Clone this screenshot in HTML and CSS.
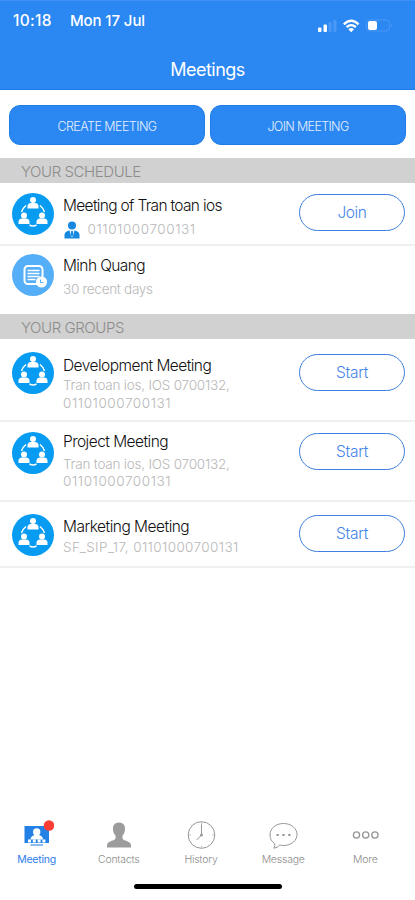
FILE: index.html
```html
<!DOCTYPE html>
<html lang="en">
<head>
<meta charset="utf-8">
<title>Meetings</title>
<link rel="stylesheet" href="styles.css">
</head>
<body>
<svg class="defs" aria-hidden="true">
  <symbol id="group" viewBox="0 0 42 42">
    <circle cx="21" cy="21" r="21" fill="#079cf2"/>
    <g fill="none" stroke="#fff" stroke-width="1.5">
      <path d="M14 12.500A13 13 0 0 0 9.500 19M28 12.500A13 13 0 0 1 32.500 19M17.500 32Q21 34 24.500 32"/>
    </g>
    <g fill="#fff">
      <circle cx="21" cy="6.900" r="3"/><path d="M15.500 15.500v-2.200q0-3 3.500-3.300h4q3.500.3 3.500 3.300v2.200z"/>
      <circle cx="12" cy="22.500" r="3"/><path d="M6.500 31v-2.200q0-3 3.500-3.300h4q3.500.3 3.500 3.300V31z"/>
      <circle cx="30" cy="22.500" r="3"/><path d="M24.500 31v-2.200q0-3 3.500-3.300h4q3.500.3 3.500 3.300V31z"/>
    </g>
  </symbol>
</svg>
<header class="header">
  <div class="status">
    <span class="time">10:18</span><span class="date">Mon 17 Jul</span>
    <svg class="signals" width="76" height="16" viewBox="0 0 76 16">
      <g fill="#fff"><rect x="1" y="9.500" width="3.500" height="4.500" rx="1"/><rect x="6.500" y="6.500" width="3.500" height="7.500" rx="1"/></g>
      <g fill="#4a98f5"><rect x="11.500" y="4" width="3.200" height="10" rx="1"/><rect x="16.300" y="2" width="3.200" height="12" rx="1"/></g>
      <g fill="none" stroke="#fff" stroke-width="2.300"><path d="M26.800 6.300Q34.200-.7 41.600 6.300M29.500 9.200Q34.200 5 38.900 9.200"/></g>
      <path d="M31.300 11.200q2.900-2.300 5.800 0l-2.900 3z" fill="#fff"/>
      <rect x="49.500" y="2" width="23" height="11" rx="3.500" fill="none" stroke="#4a98f5"/>
      <path d="M74 5.500q2 2 0 4z" fill="#4a98f5"/>
      <rect x="51" y="3" width="9" height="9" rx="2" fill="#fff"/>
    </svg>
  </div>
  <h1 class="title">Meetings</h1>
</header>
<main class="main">
  <div class="actions">
    <button class="action create">CREATE MEETING</button>
    <button class="action joinm">JOIN MEETING</button>
  </div>
  <h2 class="section"><span class="schedule">YOUR SCHEDULE</span></h2>
  <article class="row r1">
    <svg class="avatar"><use href="#group"/></svg>
    <div class="info"><h3 class="name n1">Meeting of Tran toan ios</h3>
      <p class="sub host"><svg width="16" height="18" viewBox="0 0 16 18"><circle cx="8" cy="4.600" r="4" fill="#1688e0"/><path d="M.5 17.500v-3.500q0-3.500 4.500-4.500h6q4.500 1 4.500 4.500v3.500z" fill="#1688e0"/><path d="M5.500 9.300h5L8.800 16H7.200z" fill="#fff"/><path d="M7.200 10h1.600l.6 4L8 16l-1.400-2z" fill="#1688e0"/></svg><span class="s1">01101000700131</span></p></div>
    <button class="pill join">Join</button>
  </article>
  <article class="row r2">
    <svg class="avatar" viewBox="0 0 42 42"><circle cx="21" cy="21" r="21" fill="#55aef8"/><rect x="12.500" y="12" width="18" height="18" rx="3.500" fill="none" stroke="#fff" stroke-width="2"/><path d="M15.500 16.500h12M15.500 19.500h12M15.500 22.500h12M15.500 25.500h8" stroke="#fff" stroke-width="1.400"/><circle cx="29.500" cy="28" r="5.600" fill="#fff"/><path d="M28.500 25.500v3h3" stroke="#55aef8" fill="none"/></svg>
    <div class="info"><h3 class="name n2">Minh Quang</h3><p class="sub s2">30 recent days</p></div>
  </article>
  <h2 class="section groups"><span class="grouphead">YOUR GROUPS</span></h2>
  <article class="row r3">
    <svg class="avatar"><use href="#group"/></svg>
    <div class="info"><h3 class="name n3">Development Meeting</h3><p class="sub"><span class="members">Tran toan ios, IOS 0700132,</span><br><span class="s1">01101000700131</span></p></div>
    <button class="pill">Start</button>
  </article>
  <article class="row r4">
    <svg class="avatar"><use href="#group"/></svg>
    <div class="info"><h3 class="name n4">Project Meeting</h3><p class="sub"><span class="members">Tran toan ios, IOS 0700132,</span><br><span class="s1">01101000700131</span></p></div>
    <button class="pill">Start</button>
  </article>
  <article class="row r5">
    <svg class="avatar"><use href="#group"/></svg>
    <div class="info"><h3 class="name n5">Marketing Meeting</h3><p class="sub s5">SF_SIP_17, 01101000700131</p></div>
    <button class="pill">Start</button>
  </article>
</main>
<nav class="tabs">
  <a class="tab active"><svg width="34" height="32" viewBox="0 0 34 32"><rect x="4.500" y="6" width="24.500" height="17" fill="#2380e4"/><path d="M10.500 25h12.500" stroke="#62a4ed" stroke-width="1.500"/><circle cx="16.700" cy="12" r="3.700" fill="#fff"/><path d="M10.500 19.500q0-3.500 4-4.500h4.500q4 1 4 4.500z" fill="#fff"/><path d="M8 21h18" stroke="#fff" stroke-width="3" stroke-dasharray="3 1.800"/><circle cx="29" cy="5.500" r="5.300" fill="#fa3d35"/></svg><span>Meeting</span></a>
  <a class="tab"><svg width="34" height="32" viewBox="0 0 34 32"><path d="M17 2.500c4.300 0 6.300 3 6 6.700 0 2.500-1 4.900-2.500 6.400v2.900c.5 2.300 8 2.300 8.500 6.500v2.500H5V25c.5-4.200 8-4.200 8.500-6.500v-2.900C12 14.100 11 11.700 11 9.200c-.3-3.700 1.700-6.700 6-6.700z" fill="#9c9c9c"/></svg><span>Contacts</span></a>
  <a class="tab"><svg width="34" height="32" viewBox="0 0 34 32" fill="none" stroke="#969696"><circle cx="17.500" cy="15" r="13.300"/><path d="M17.500 4.500V15l-4.800 5"/><circle cx="17.500" cy="15" r="1" fill="#969696"/><path d="M17.500 2.500v2M17.500 25.500v2M5 15h2M28 15h2" stroke-width=".6"/></svg><span>History</span></a>
  <a class="tab"><svg width="34" height="32" viewBox="0 0 34 32" fill="none" stroke="#969696"><path d="M8.500 23.500C5.500 21.500 4 18.500 4 15 4 8.500 9.700 3.500 17.500 3.500S31 8.500 31 14.500s-5.700 11-13.500 11q-2 0-3.700-.5-2.300 3-6 3.200 1.800-2.500.7-4.700z"/><path d="M10.500 15h2.200M16.400 15h2.200M22.300 15h2.200" stroke-width="2"/></svg><span>Message</span></a>
  <a class="tab"><svg width="34" height="32" viewBox="0 0 34 32" fill="none" stroke="#969696" stroke-width="1.300"><circle cx="8.500" cy="15" r="3.100"/><circle cx="17.700" cy="15" r="3.100"/><circle cx="26.900" cy="15" r="3.100"/></svg><span>More</span></a>
</nav>
<div class="homebar"></div>
</body>
</html>
```
FILE: styles.css
```css
* { box-sizing: border-box; }
body { margin: 0; width: 415px; height: 900px; background: #fff; font-family: Inter, "Liberation Sans", sans-serif; display: flex; flex-direction: column; overflow: hidden; }
h1, h2, h3, p { margin: 0; font-weight: 300; }
button { font-family: inherit; padding: 0; cursor: pointer; }
.defs { position: absolute; width: 0; height: 0; }
.header { height: 90px; background: #2b87f1; color: #fff; border-top: 1px solid #3c90f6; border-bottom: 1px solid #1c79e6; }
.status { display: flex; height: 40px; padding: 9px 22px 0 13px; font-size: 15px; line-height: 22px; font-weight: 500; }
.time { width: 57px; font-size: 15.500px; letter-spacing: .3px; }
.date { letter-spacing: -.1px; }
.signals { margin: 8px 0 0 auto; }
.title { font-size: 18px; line-height: 24px; margin-top: 17px; text-align: center; font-weight: 400; letter-spacing: -.5px; }
.main { flex: 1; }
.actions { display: flex; gap: 5px; padding: 15px 9px 13px; height: 68px; }
.action { flex: 1; height: 40px; border: 1px solid #1f7be6; border-radius: 11px; background: #2b87f1; color: #e4f0ff; font-size: 12.5px; font-weight: 300; padding-top: 2px; letter-spacing: -.55px; }
.joinm { letter-spacing: -.65px; }
.section { height: 25px; padding: 1px 21px 0; background: #d1d1d1; color: #8c8c8c; font-size: 15px; line-height: 25px; letter-spacing: -.42px; }
.groups { margin-bottom: 1px; }
.row { display: flex; align-items: flex-start; padding: 0 10px 0 12px; border-bottom: 2px solid #f0f0f0; }
.avatar { width: 42px; height: 42px; flex: none; }
.info { flex: 1; margin-left: 9px; white-space: nowrap; }
.name { font-size: 15.500px; line-height: 20px; color: #111; }
.n1 { letter-spacing: -.68px; }
.n2 { letter-spacing: -.6px; }
.n3, .n4 { letter-spacing: -.54px; }
.n5 { letter-spacing: -.5px; }
.sub { font-size: 13.500px; line-height: 17.500px; color: #b8b8b8; }
.s1 { letter-spacing: .57px; }
.s2 { letter-spacing: -.28px; }
.s5 { letter-spacing: .38px; }
.members { letter-spacing: -.22px; }
.host { display: flex; align-items: center; gap: 7.500px; padding-left: 1px; }
.pill { width: 106px; height: 37px; flex: none; border: 1.500px solid #3d80df; border-radius: 19px; background: #fff; color: #4384e8; font-size: 15.500px; font-weight: 300; letter-spacing: -.3px; }
.join { letter-spacing: -.4px; }
.r1 { height: 63px; }
.r1 .avatar { margin-top: 10px; }
.r1 .info { margin-top: 13px; }
.r1 .host { margin-top: 5px; }
.r1 .pill { margin-top: 11px; }
.r2 { height: 68px; border: 0; }
.r2 .avatar { margin-top: 8px; }
.r2 .info { margin-top: 10px; }
.r2 .sub { margin-top: 5px; }
.r3 { height: 82px; }
.r3 .avatar { margin-top: 12px; }
.r3 .info { margin-top: 16px; }
.r3 .sub { margin-top: 1px; }
.r3 .pill { margin-top: 14px; }
.r4 { height: 80px; }
.r4 .avatar { margin-top: 10px; }
.r4 .info { margin-top: 10px; }
.r4 .sub { margin-top: 3.500px; }
.r4 .pill { margin-top: 11px; }
.r5 { height: 66px; }
.r5 .avatar { margin-top: 12px; }
.r5 .info { margin-top: 15px; }
.r5 .sub { margin-top: 2px; }
.r5 .pill { margin-top: 13px; }
.tabs { display: flex; height: 64px; margin-left: -4.500px; }
.tab { width: 82.200px; flex: none; display: flex; flex-direction: column; align-items: center; font-size: 10.500px; line-height: 16px; font-weight: 300; letter-spacing: -.22px; color: #8c8c8c; }
.active { color: #2d7de8; font-weight: 400; }
.homebar { width: 148px; height: 5px; margin: 0 0 11px 134px; border-radius: 3px; background: #000; }
```
